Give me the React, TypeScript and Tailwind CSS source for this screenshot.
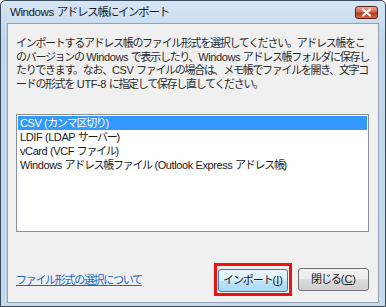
import React from "react";

const font = { fontFamily: '"Liberation Sans", "Noto Sans CJK JP", sans-serif' };

// Latin runs keep near-normal spacing, only the CJK runs are squeezed (Meiryo UI is narrow)
const Txt = ({ t }: { t: string }) => {
  const parts = t.match(/[\x20-\x7e]+|[^\x20-\x7e]+/g) || [];
  return (
    <>
      {parts.map((p, i) =>
        /^[\x20-\x7e]+$/.test(p) ? (
          <span key={i} className="tracking-[-0.4px]">{p}</span>
        ) : (
          <span key={i} className="tracking-[-1.3px]">{p}</span>
        )
      )}
    </>
  );
};

const lines = [
  "インポートするアドレス帳のファイル形式を選択してください。アドレス帳をこ",
  "のバージョンの Windows で表示したり、Windows アドレス帳フォルダに保存し",
  "たりできます。なお、CSV ファイルの場合は、メモ帳でファイルを開き、文字コ",
  "ードの形式を UTF-8 に指定して保存し直してください。",
];

const items = [
  "CSV (カンマ区切り)",
  "LDIF (LDAP サーバー)",
  "vCard (VCF ファイル)",
  "Windows アドレス帳ファイル (Outlook Express アドレス帳)",
];

export default function App() {
  return (
    <div className="w-[386px] h-[307px] bg-white" style={font}>
      <div className="w-full h-full flex flex-col border border-[#3b4b5e] rounded-t-[5px] bg-[linear-gradient(to_bottom,#d6e5f4,#c2d7ec_12%,#c6daee)]">
        {/* title bar */}
        <div className="h-[22px] flex items-center pl-[9px] pr-[7px]">
          <span className="text-[11.5px] text-[#1a1a1a] leading-none mt-[1px] whitespace-nowrap">
            <Txt t="Windows アドレス帳にインポート" />
          </span>
          <svg className="ml-auto mt-[1px]" width="23" height="13" viewBox="0 0 23 13">
            <defs>
              <linearGradient id="cl" x1="0" y1="0" x2="0" y2="1">
                <stop offset="0" stopColor="#eeb3a4" />
                <stop offset="0.45" stopColor="#d2654e" />
                <stop offset="0.55" stopColor="#b7361f" />
                <stop offset="1" stopColor="#d9704f" />
              </linearGradient>
            </defs>
            <rect x="0.5" y="0.5" width="22" height="12" rx="2.5" fill="url(#cl)" stroke="#5e2219" />
            <path d="M8 3.5 L15 9.5 M15 3.5 L8 9.5" stroke="#ffffff" strokeWidth="2.2" strokeLinecap="round" />
          </svg>
        </div>

        {/* client area */}
        <div className="flex-1 mx-[6px] mb-[3px] border border-[#8fa4ba] bg-[#f0f0f0] flex flex-col pt-[13px] pl-[8px] pr-[9px]">
          <div className="text-[11px] leading-[13.5px] text-[#2a2a2a] whitespace-nowrap">
            {lines.map((l, i) => (
              <div key={i}>
                <Txt t={l} />
              </div>
            ))}
          </div>

          <div className="mt-[23px] h-[118px] border border-[#8a8f98] bg-white p-[1px] flex flex-col">
            {items.map((it, i) => (
              <div
                key={i}
                className={
                  i === 0
                    ? "h-[14px] leading-[14px] pl-[2px] text-[11px] whitespace-nowrap bg-[#3399ff] text-white"
                    : "h-[14px] leading-[14px] pl-[2px] text-[11px] whitespace-nowrap text-[#1a1a1a]"
                }
              >
                <Txt t={it} />
              </div>
            ))}
          </div>

          <div className="mt-[31px] flex items-center">
            <a className="text-[11px] tracking-[-1.3px] text-[#1a66cc] underline underline-offset-[1px] mt-[2px]">
              ファイル形式の選択について
            </a>
            <div className="ml-auto flex items-center">
              <div className="border-[3px] border-[#ee1111] p-[1px]">
                <button className="w-[70px] h-[23px] rounded-[3px] border border-[#3c7fb1] bg-[linear-gradient(to_bottom,#eaf6fd,#d9f0fc_50%,#bee6fd_50%,#a7d9f5)] text-[11px] text-[#1a1a1a] whitespace-nowrap">
                  <span className="tracking-[-1.1px]">インポート</span>(<span className="underline">I</span>)
                </button>
              </div>
              <button className="ml-[6px] w-[71px] h-[23px] rounded-[3px] border border-[#707070] bg-[linear-gradient(to_bottom,#f2f2f2,#ebebeb_50%,#dddddd_50%,#cfcfcf)] text-[11px] text-[#1a1a1a] whitespace-nowrap">
                <span className="tracking-[-1.1px]">閉じる</span>(<span className="underline">C</span>)
              </button>
            </div>
          </div>
        </div>
      </div>
    </div>
  );
}
